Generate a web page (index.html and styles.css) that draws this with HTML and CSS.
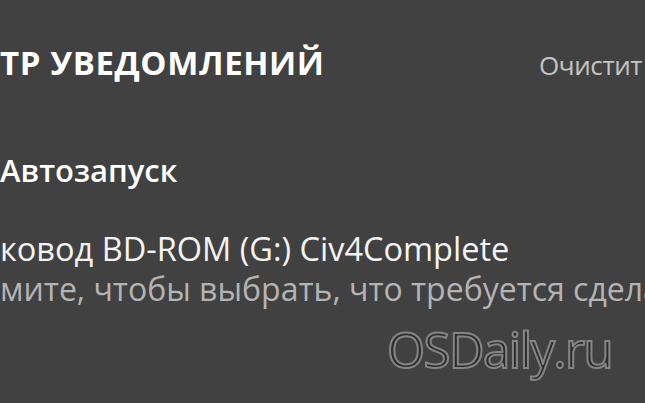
FILE: index.html
```html
<!DOCTYPE html>
<html lang="ru">
<head>
    <meta charset="UTF-8">
    <meta name="viewport" content="width=device-width, initial-scale=1.0">
    <title>Центр уведомлений</title>
    <link rel="stylesheet" href="styles.css">
</head>
<body>

    <!-- Action center header -->
    <div class="header">
        <h1 class="title">ТР УВЕДОМЛЕНИЙ</h1>
        <span class="clear">Очистит</span>
    </div>

    <!-- Notification group -->
    <div class="group">
        <h2 class="group-name">Автозапуск</h2>
        <div class="toast">
            <p class="toast-title">ковод BD-ROM (G:) Civ4Complete</p>
            <p class="toast-text">мите, чтобы выбрать, что требуется сделать с этим диском.</p>
        </div>
    </div>

    <div class="watermark">OSDaily.ru</div>

</body>
</html>
```

FILE: styles.css
```css
html, body {
    margin: 0;
    height: 100%;
    overflow: hidden;
}
body {
    font-family: "Open Sans", "Noto Sans", sans-serif;
    background-color: #414141;
    color: #fff;
    padding-top: 46px;
    box-sizing: border-box;
}
.header {
    display: grid;
    grid-template-columns: 539px auto;
    align-items: baseline;
}
.title {
    margin: 0;
    font-size: 33px;
    font-weight: 700;
    line-height: 1;
    letter-spacing: 0.6px;
    white-space: nowrap;
}
.clear {
    font-size: 26px;
    line-height: 1;
    letter-spacing: -0.4px;
    color: #c4c4c4;
    white-space: nowrap;
}
.group-name {
    margin: 76px 0 0;
    font-size: 31px;
    font-weight: 600;
    line-height: 1;
}
.toast p {
    margin: 0;
    font-size: 32.5px;
    line-height: 1;
    white-space: nowrap;
}
.toast-title {
    margin-top: 47px !important;
    color: #f4f4f4;
}
.toast-text {
    margin-top: 7px !important;
    font-size: 32px !important;
    color: #b4b4b4;
}
.watermark {
    margin: 20px 0 0 387px;
    font-size: 49px;
    line-height: 1;
    letter-spacing: -1.5px;
    color: #2c2c2c;
    -webkit-text-stroke: 2px #858585;
}
```
